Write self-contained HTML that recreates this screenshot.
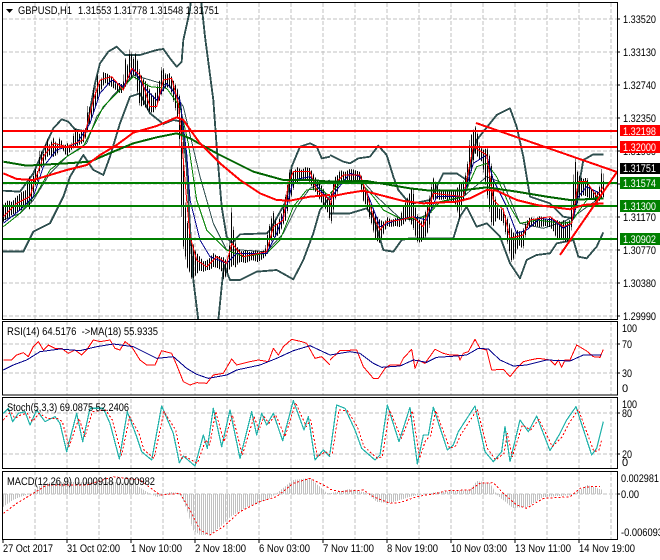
<!DOCTYPE html>
<html><head><meta charset="utf-8"><style>
html,body{margin:0;padding:0;background:#fff;width:660px;height:560px;overflow:hidden}
svg{display:block}
text{font-family:"Liberation Sans",sans-serif;font-size:11px;fill:#000;text-rendering:geometricPrecision}
.g{stroke:#c0c0c0;stroke-width:1;stroke-dasharray:4 2;fill:none}
polyline{fill:none;stroke-linejoin:round}
.bb{stroke:#2f4f4f;stroke-width:5.6}
.bm{stroke:#2f4f4f;stroke-width:3}
.rt{stroke:#f00;stroke-width:6}
.gt{stroke:#006400;stroke-width:6}
.r1{stroke:#f00;stroke-width:3}
.b1{stroke:#00008b;stroke-width:3}
.g1{stroke:#008000;stroke-width:3}
.st{stroke:#20b2aa;stroke-width:3.6}
.sd{stroke:#f00;stroke-width:3;stroke-dasharray:6 6}
.w{fill:#fff}
</style></head><body>
<svg width="660" height="560" viewBox="0 0 660 560" xmlns="http://www.w3.org/2000/svg">
<defs>
<pattern id="bars" patternUnits="userSpaceOnUse" x="3" y="0" width="2" height="4"><rect width="1" height="4" fill="#000"/></pattern>
<pattern id="hist" patternUnits="userSpaceOnUse" x="3" y="0" width="2" height="4"><rect width="1" height="4" fill="#c0c0c0"/></pattern>
<clipPath id="c1"><rect x="3" y="3" width="614" height="316"/></clipPath>
<clipPath id="c2"><rect x="3" y="322" width="614" height="73"/></clipPath>
<clipPath id="c3"><rect x="3" y="398" width="614" height="70"/></clipPath>
<clipPath id="c4"><rect x="3" y="472" width="614" height="67"/></clipPath>
</defs>
<rect width="660" height="560" fill="#fff"/>

<!-- grid -->
<path class="g" d="M35 3V539M67 3V539M99 3V539M131 3V539M163 3V539M195 3V539M227 3V539M259 3V539M291 3V539M323 3V539M355 3V539M387 3V539M419 3V539M451 3V539M483 3V539M515 3V539M547 3V539M579 3V539M611 3V539"/>
<path class="g" d="M3 19H617M3 52H617M3 85H617M3 118H617M3 151H617M3 184H617M3 217H617M3 250H617M3 283H617M3 316H617M3 344H617M3 373H617M3 413H617M3 454H617M3 494H617"/>
<rect x="3" y="320" width="614" height="2" fill="#fff"/>
<rect x="3" y="395" width="614" height="3" fill="#fff"/>
<rect x="3" y="468" width="614" height="4" fill="#fff"/>

<g clip-path="url(#c1)" shape-rendering="crispEdges">
<path d="M3 168H617" stroke="#c0c0c0" stroke-width="1"/>
<!-- BB outer -->
<g transform="scale(.33333)">
<polyline class="bb" points="8,572 60,575 100,520 135,440 160,385 185,358 205,365 225,388 260,395 270,330 285,250 300,190 325,155 350,140 375,165 420,165 470,150 490,147 510,175 530,200 545,185 550,120 570,30 575,-30 600,-30 615,110 640,300 650,440 665,620 680,710 695,730 720,703 800,700 810,690 860,600 875,500 900,440 930,430 950,440 965,475 990,470"/>
<polyline class="bb" points="8,755 70,755 100,695 150,670 190,590 210,530 250,465 280,510 310,525 330,470 360,370 390,290 420,280 450,340 490,372 520,360 545,365 560,500 570,680 580,840 595,960 655,960 665,860 672,795 690,840 720,840 770,815 830,810 880,838 910,780 940,700 960,630 990,590"/>
<polyline class="bm" points="10,660 60,640 100,600 150,520 200,470 260,430 290,350 340,285 400,225 450,240 510,258 550,320 600,530 640,670 680,750 720,750 800,755 850,700 890,620 930,565 990,540"/>
</g>
<g transform="translate(330,0) scale(.33333)">
<polyline class="bb" points="0,465 40,485 60,490 85,475 120,470 145,437 170,465 190,530 205,570 230,600 250,610 300,600 340,520 380,520 410,540 440,420 500,345 540,325 560,380 580,470 600,590 660,610 700,650 730,655 760,480 790,463 820,463"/>
<polyline class="bb" points="0,640 60,640 110,625 130,650 160,750 190,755 215,720 240,715 370,715 390,650 410,620 440,680 470,670 510,710 540,790 570,835 590,780 620,765 660,760 680,730 730,720 745,770 770,775 800,740 820,697"/>
<polyline class="bm" points="0,550 100,545 140,590 210,655 250,660 290,645 320,610 400,590 470,530 520,550 570,670 640,685 700,665 730,650 800,600 820,580"/>
</g>
<!-- bars -->
<polygon fill="url(#bars)" points="3,205 8,200 12,202 17,196 22,192 26,190 29,176 32,182 35,168 38,172 40,148 43,155 47,138 50,146 53,137 57,145 60,137 64,146 67,143 71,146 75,128 79,134 83,130 86,128 88,103 91,112 93,87 95,95 97,73 100,85 103,72 108,74 112,77 116,84 120,83 123,85 125,57 128,66 130,47 133,60 135,52 138,62 140,73 144,80 147,83 150,90 153,97 156,92 158,83 160,80 162,65 166,75 170,73 173,80 175,83 178,90 180,97 182,110 183,133 185,200 187,220 190,232 192,240 196,252 200,257 204,262 207,260 210,258 213,253 217,256 220,256 222,258 224,257 227,262 230,240 231,205 233,225 236,245 238,248 242,252 245,250 250,252 255,250 260,252 265,250 268,230 271,220 273,210 277,225 280,217 283,210 286,193 288,180 290,168 294,172 297,167 302,170 306,167 310,168 313,173 317,180 320,183 324,190 327,197 330,200 333,185 335,177 338,175 340,170 345,172 350,169 355,170 360,172 363,180 366,190 370,200 373,208 375,213 378,218 380,220 385,222 387,217 392,220 396,218 400,217 404,205 408,197 411,190 413,187 415,205 418,217 421,222 425,213 429,200 433,177 437,185 440,190 445,191 450,190 455,192 460,183 463,183 465,177 468,160 470,137 473,132 475,125 478,135 480,147 484,150 487,147 490,157 492,167 495,195 497,207 501,210 503,207 505,215 507,217 510,225 512,230 515,235 517,230 521,232 523,230 526,222 530,217 535,219 540,216 543,217 547,220 550,217 554,220 557,220 561,222 563,220 567,222 570,220 573,185 575,157 577,170 580,177 584,179 587,177 590,188 592,190 595,192 597,193 600,185 602,167 603,185 604,170 604,197 600,200 597,203 594,200 592,200 587,197 584,195 580,197 577,205 575,213 572,225 570,240 566,242 563,240 560,238 557,240 554,232 550,227 545,226 540,227 535,226 530,227 527,228 523,250 520,245 517,250 514,258 512,263 509,250 507,240 503,222 500,220 497,218 494,225 492,227 488,200 485,180 482,162 480,160 475,153 472,170 470,180 467,190 465,197 462,205 460,220 455,203 450,200 445,199 440,200 436,198 433,200 429,230 425,238 421,242 418,243 415,235 413,227 410,222 408,217 404,224 400,227 395,226 390,227 387,226 383,235 380,243 376,240 375,238 372,225 370,220 366,205 363,200 360,182 355,180 350,181 345,180 340,182 337,195 335,200 333,215 331,225 328,213 325,208 320,200 316,192 313,190 310,182 305,180 300,181 295,183 292,195 290,200 288,210 286,220 283,225 280,233 276,237 273,237 270,245 268,253 264,258 258,262 252,260 246,263 242,262 238,263 236,268 233,265 231,267 228,272 224,280 222,272 218,268 213,267 210,270 207,270 203,272 200,270 196,275 192,280 190,273 187,267 185,255 183,245 181,200 180,150 178,120 175,107 172,95 170,87 166,88 162,93 160,100 158,103 155,110 153,113 150,112 147,110 144,105 140,107 137,90 135,73 132,78 130,77 127,85 125,87 122,93 120,93 116,90 112,87 108,85 105,83 102,88 100,95 97,100 95,110 93,113 90,122 88,130 85,140 83,143 79,145 75,147 71,150 67,157 63,150 60,147 57,155 53,157 50,155 47,157 43,165 40,170 38,180 35,187 32,200 30,210 27,205 25,205 22,210 17,212 12,215 8,218 3,222"/>
<!-- thin MAs -->
<g transform="scale(.33333)">
<polyline class="g1" points="10,680 60,640 110,580 150,510 200,470 250,440 280,380 310,320 350,280 400,230 450,260 500,265 540,320 565,430 590,600 620,690 680,750 730,770 800,760 840,720 880,620 920,570 960,565 990,590"/>
<polyline class="b1" points="10,670 60,630 100,590 130,500 170,450 230,430 270,370 300,280 335,240 370,260 400,205 430,260 470,300 500,250 540,300 560,460 570,600 600,720 630,770 680,790 710,760 800,760 830,700 860,620 880,540 930,530 960,570 990,600"/>
<polyline class="r1" points="10,650 50,610 90,590 105,540 130,470 160,430 200,440 250,420 280,300 300,240 335,230 370,270 395,205 420,225 450,320 470,320 490,240 515,235 535,310 550,480 560,600 570,710 590,780 620,800 650,770 680,790 695,730 730,770 800,755 820,680 850,660 865,550 880,515 930,515 950,570 990,600"/>
</g>
<g transform="translate(330,0) scale(.33333)">
<polyline class="g1" points="0,580 40,540 90,545 130,590 160,630 210,655 250,655 290,650 330,605 400,590 440,500 470,490 500,530 540,620 570,670 620,660 700,670 725,665 770,600 810,590"/>
<polyline class="b1" points="0,600 20,570 60,520 90,530 120,600 150,680 200,660 250,650 290,660 320,590 400,590 430,490 470,465 490,540 530,620 560,700 590,690 630,655 670,660 700,685 725,670 745,590 770,560 810,580"/>
<polyline class="r1" points="0,620 15,550 40,525 90,525 110,580 130,650 150,690 170,665 210,660 250,650 280,680 310,580 400,590 430,440 470,465 490,600 520,630 540,715 580,705 600,660 660,650 700,680 725,670 745,545 770,545 800,590 820,560"/>
</g>
<!-- horizontal levels -->
<path d="M3 131H617M3 147H617" stroke="#f00" stroke-width="2"/>
<path d="M3 183H617M3 206H617M3 239H617" stroke="#008000" stroke-width="2"/>
<!-- thick MAs -->
<g transform="scale(.33333)">
<polyline class="gt" points="10,485 80,497 200,490 270,485 340,455 400,430 470,412 530,400 570,415 650,460 760,515 850,540 930,540 990,545"/>
<polyline class="rt" points="10,520 50,537 100,540 150,525 200,510 260,495 300,465 350,435 400,398 470,378 530,352 550,360 600,430 660,490 720,540 780,580 830,600 870,602 930,590 990,585"/>
</g>
<g transform="translate(330,0) scale(.33333)">
<polyline class="gt" points="0,545 110,543 240,565 300,572 390,572 470,562 560,575 650,590 720,600 820,595"/>
<polyline class="rt" points="0,590 50,580 100,572 150,585 220,603 280,610 380,605 420,595 470,570 500,572 560,600 620,615 720,628 760,615 820,610"/>
</g>
<!-- trendlines -->
<path d="M476 123L617 172L560 255" fill="none" stroke="#f00" stroke-width="2"/>
</g>

<!-- RSI -->
<g clip-path="url(#c2)" shape-rendering="crispEdges">
<g transform="translate(0,280) scale(.33333)">
<polyline class="r1" points="10,240 35,240 50,225 70,218 85,230 100,200 115,185 130,210 145,195 165,205 185,205 205,220 225,210 245,225 260,210 280,180 300,185 330,180 345,205 360,210 375,185 395,200 420,240 440,255 465,255 485,212 515,220 530,255 550,305 570,315 590,308 620,310 640,285 670,280 695,237 710,255 750,245 775,240 805,245 820,205 835,225 850,200 875,178 905,185 920,190 945,235 965,230 990,255"/>
<polyline class="b1" points="10,270 40,255 80,240 120,215 180,207 240,212 290,200 340,192 400,200 440,220 470,235 520,230 560,265 590,283 625,295 680,285 710,270 780,255 830,235 880,212 930,197 990,225"/>
</g>
<g transform="translate(330,280) scale(.33333)">
<polyline class="r1" points="0,240 30,212 80,210 100,260 130,295 145,295 165,265 180,255 210,255 220,235 245,208 255,265 265,240 285,250 315,208 340,220 360,225 385,225 390,240 400,220 415,215 435,178 450,205 470,210 485,270 520,268 540,290 560,265 580,245 600,240 625,235 660,240 675,255 685,240 695,262 705,240 720,240 740,195 770,213 790,230 810,232 820,208"/>
<polyline class="b1" points="0,225 60,215 90,220 130,250 155,262 210,258 250,240 290,247 320,232 380,228 410,225 445,205 475,207 510,240 550,258 590,255 650,240 720,243 760,225 815,225"/>
</g>
</g>

<!-- Stoch -->
<g clip-path="url(#c3)" shape-rendering="crispEdges">
<g transform="translate(0,280) scale(.33333)">
<polyline class="st" points="10,400 25,385 38,425 55,400 75,395 90,435 110,390 135,425 165,410 180,430 200,515 230,400 248,485 270,385 310,385 330,430 358,537 382,395 410,470 425,515 455,540 485,378 520,460 538,548 550,528 585,558 610,465 622,505 640,385 665,500 690,390 720,535 755,395 770,465 785,400 800,435 820,400 848,482 880,362 912,450 925,410 945,540 970,510 990,530"/>
<polyline class="sd" transform="translate(7,0)" points="3,420 25,395 38,415 55,405 75,400 90,425 110,400 135,415 165,415 180,425 200,500 230,415 248,470 270,395 310,390 330,420 358,525 382,410 410,460 425,510 455,535 485,395 520,450 538,535 550,530 585,550 610,480 622,495 640,395 665,485 690,405 720,525 755,410 770,450 785,410 800,430 820,405 848,470 880,368 912,440 925,420 945,530 970,515 983,525"/>
</g>
<g transform="translate(330,280) scale(.33333)">
<polyline class="st" points="0,520 20,375 45,385 75,450 95,505 135,540 150,525 172,375 207,485 240,382 262,552 280,465 295,465 310,382 352,510 370,495 385,455 435,378 465,515 490,545 515,515 525,440 540,545 570,420 595,455 620,408 660,512 690,460 710,420 738,380 785,525 800,505 820,425"/>
<polyline class="sd" transform="translate(7,0)" points="0,520 20,390 45,392 75,440 95,500 135,535 150,530 172,390 207,475 240,392 262,535 280,480 295,468 310,392 352,505 370,498 385,465 435,388 465,505 490,540 515,520 525,460 540,530 570,435 595,450 620,418 660,500 690,470 710,430 738,388 785,515 800,510 808,480"/>
</g>
</g>

<!-- MACD -->
<g clip-path="url(#c4)" shape-rendering="crispEdges">
<polygon fill="url(#hist)" points="3,507 13,500 20,497 33,493 37,487 50,482 83,482 110,482 133,483 147,492 157,497 163,495 170,492 180,493 187,510 193,530 200,535 210,535 220,527 230,517 247,507 267,500 277,493 293,480 310,478 327,493 330,493 337,492 350,489 367,493 377,502 390,503 413,496 437,492 470,490 477,481 490,483 497,495 513,508 527,507 543,497 573,495 587,485 603,490 603,494 3,494"/>
<g transform="translate(0,280) scale(.33333)">
<polyline class="sd" points="10,700 50,670 100,640 140,615 200,615 260,615 340,590 420,600 480,645 540,640 570,690 600,750 630,765 670,740 720,695 780,665 830,650 880,610 930,595 990,625"/>
</g>
<g transform="translate(330,280) scale(.33333)">
<polyline class="sd" points="0,628 30,635 100,630 130,650 180,670 210,668 260,650 320,640 350,632 420,630 450,610 490,608 520,640 560,675 590,685 640,655 720,650 750,625 780,620 810,620"/>
</g>
</g>

<!-- frames -->
<g fill="none" stroke="#000" stroke-width="1" shape-rendering="crispEdges">
<rect x="2.5" y="2.5" width="615" height="317"/>
<rect x="2.5" y="321.5" width="615" height="73.5"/>
<rect x="2.5" y="397.5" width="615" height="71"/>
<rect x="2.5" y="471.5" width="615" height="68"/>
<path d="M617 19h3M617 52h3M617 85h3M617 118h3M617 151h3M617 184h3M617 217h3M617 250h3M617 283h3M617 316h3M617 344h3M617 373h3M617 413h3M617 454h3M617 494h3M3 539v4M67 539v4M131 539v4M195 539v4M259 539v4M323 539v4M387 539v4M451 539v4M515 539v4M579 539v4"/>
</g>

<!-- header -->
<polygon points="6,9 13,9 9.5,13" fill="#000"/>
<text x="18" y="14" textLength="54" lengthAdjust="spacingAndGlyphs">GBPUSD,H1</text>
<text x="78" y="14" textLength="141" lengthAdjust="spacingAndGlyphs">1.31553 1.31778 1.31548 1.31751</text>
<text x="7" y="335" textLength="151" lengthAdjust="spacingAndGlyphs" xml:space="preserve">RSI(14) 64.5176  -&gt;MA(18) 55.9335</text>
<text x="7" y="411" textLength="122" lengthAdjust="spacingAndGlyphs">Stoch(5,3,3) 69.0875 52.2406</text>
<text x="7" y="485" textLength="148" lengthAdjust="spacingAndGlyphs">MACD(12,26,9) 0.000918 0.000982</text>

<!-- price scale -->
<g>
<text x="623" y="23" textLength="33" lengthAdjust="spacingAndGlyphs">1.33520</text>
<text x="623" y="56" textLength="33" lengthAdjust="spacingAndGlyphs">1.33130</text>
<text x="623" y="89" textLength="33" lengthAdjust="spacingAndGlyphs">1.32740</text>
<text x="623" y="122" textLength="33" lengthAdjust="spacingAndGlyphs">1.32350</text>
<text x="623" y="155" textLength="33" lengthAdjust="spacingAndGlyphs">1.31960</text>
<text x="623" y="221" textLength="33" lengthAdjust="spacingAndGlyphs">1.31170</text>
<text x="623" y="254" textLength="33" lengthAdjust="spacingAndGlyphs">1.30770</text>
<text x="623" y="287" textLength="33" lengthAdjust="spacingAndGlyphs">1.30380</text>
<text x="623" y="320" textLength="33" lengthAdjust="spacingAndGlyphs">1.29990</text>
</g>
<g shape-rendering="crispEdges">
<rect x="620" y="125" width="40" height="11" fill="#f00"/>
<rect x="620" y="141" width="40" height="12" fill="#f00"/>
<rect x="620" y="163" width="40" height="11" fill="#000"/>
<rect x="620" y="177" width="40" height="12" fill="#008000"/>
<rect x="620" y="200" width="40" height="12" fill="#008000"/>
<rect x="620" y="233" width="40" height="12" fill="#008000"/>
</g>
<g class="w">
<text class="w" style="fill:#fff" x="623" y="135" textLength="33" lengthAdjust="spacingAndGlyphs">1.32198</text>
<text class="w" style="fill:#fff" x="623" y="151" textLength="33" lengthAdjust="spacingAndGlyphs">1.32000</text>
<text class="w" style="fill:#fff" x="623" y="172" textLength="33" lengthAdjust="spacingAndGlyphs">1.31751</text>
<text class="w" style="fill:#fff" x="623" y="187" textLength="33" lengthAdjust="spacingAndGlyphs">1.31574</text>
<text class="w" style="fill:#fff" x="623" y="210" textLength="33" lengthAdjust="spacingAndGlyphs">1.31300</text>
<text class="w" style="fill:#fff" x="623" y="243" textLength="33" lengthAdjust="spacingAndGlyphs">1.30902</text>
</g>

<!-- indicator scales -->
<text x="622" y="332" textLength="15" lengthAdjust="spacingAndGlyphs">100</text>
<text x="622" y="348" textLength="10" lengthAdjust="spacingAndGlyphs">70</text>
<text x="622" y="377" textLength="10" lengthAdjust="spacingAndGlyphs">30</text>
<text x="622" y="392">0</text>
<text x="622" y="408" textLength="15" lengthAdjust="spacingAndGlyphs">100</text>
<text x="622" y="417" textLength="10" lengthAdjust="spacingAndGlyphs">80</text>
<text x="622" y="458" textLength="10" lengthAdjust="spacingAndGlyphs">20</text>
<text x="622" y="466">0</text>
<text x="621" y="482" textLength="38" lengthAdjust="spacingAndGlyphs">0.002981</text>
<text x="621" y="498" textLength="18" lengthAdjust="spacingAndGlyphs">0.00</text>
<text x="621" y="536" textLength="42" lengthAdjust="spacingAndGlyphs">-0.006093</text>

<!-- time axis -->
<text x="3" y="552" textLength="50" lengthAdjust="spacingAndGlyphs">27 Oct 2017</text>
<text x="67" y="552" textLength="53" lengthAdjust="spacingAndGlyphs">31 Oct 02:00</text>
<text x="131" y="552" textLength="51" lengthAdjust="spacingAndGlyphs">1 Nov 10:00</text>
<text x="195" y="552" textLength="51" lengthAdjust="spacingAndGlyphs">2 Nov 18:00</text>
<text x="259" y="552" textLength="51" lengthAdjust="spacingAndGlyphs">6 Nov 03:00</text>
<text x="323" y="552" textLength="51" lengthAdjust="spacingAndGlyphs">7 Nov 11:00</text>
<text x="387" y="552" textLength="51" lengthAdjust="spacingAndGlyphs">8 Nov 19:00</text>
<text x="451" y="552" textLength="56" lengthAdjust="spacingAndGlyphs">10 Nov 03:00</text>
<text x="515" y="552" textLength="56" lengthAdjust="spacingAndGlyphs">13 Nov 11:00</text>
<text x="579" y="552" textLength="56" lengthAdjust="spacingAndGlyphs">14 Nov 19:00</text>
</svg>
</body></html>
